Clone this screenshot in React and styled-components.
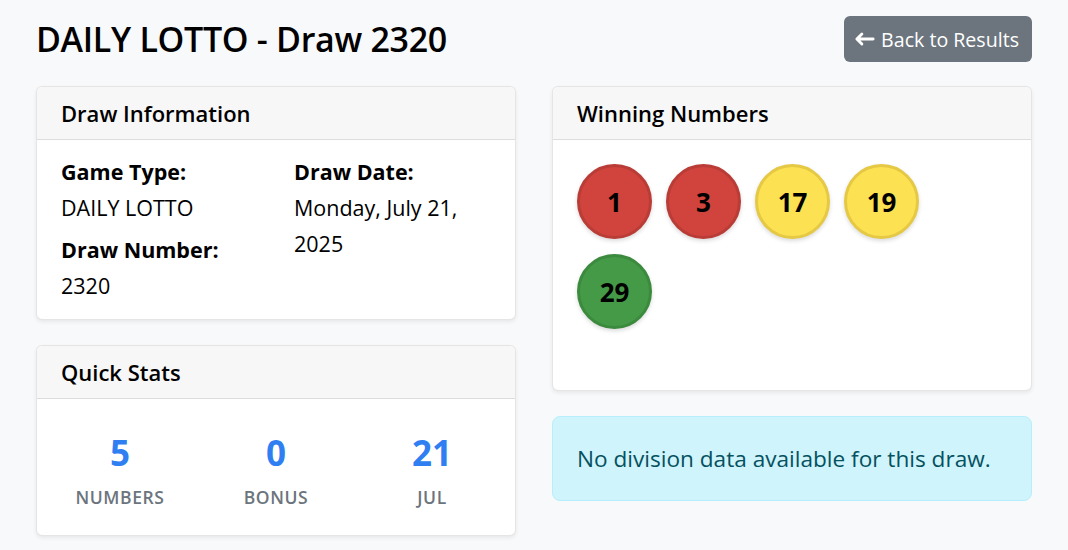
import React from 'react';
import styled, { createGlobalStyle } from 'styled-components';
import { BsArrowLeft } from 'react-icons/bs';

const GlobalStyle = createGlobalStyle`
  * { box-sizing: border-box; }
  body {
    margin: 0;
    background-color: #f8f9fa;
    font-family: "Open Sans", "Noto Sans", sans-serif;
    color: #212529;
  }
`;

const Page = styled.div`
  padding: 16px 36px 24px;
`;

const Header = styled.div`
  display: flex;
  justify-content: space-between;
  align-items: center;
  margin-bottom: 24px;
`;

const Title = styled.h1`
  margin: 0;
  font-size: 34px;
  font-weight: 600;
  color: #000;
  letter-spacing: -0.3px;
`;

const BackButton = styled.button`
  display: flex;
  align-items: center;
  gap: 6px;
  height: 46px;
  padding: 0 13px 0 11px;
  background-color: #6c757d;
  color: #fff;
  border: none;
  border-radius: 6px;
  font-family: inherit;
  font-size: 19.6px;
  cursor: pointer;
`;

const Columns = styled.div`
  display: grid;
  grid-template-columns: 1fr 1fr;
  column-gap: 36px;
  align-items: start;
`;

const Column = styled.div`
  display: flex;
  flex-direction: column;
  gap: 25px;
`;

const Card = styled.div`
  background-color: #fff;
  border: 1px solid rgba(0, 0, 0, 0.1);
  border-radius: 6px;
  box-shadow: 0 2px 4px rgba(0, 0, 0, 0.07);
  overflow: hidden;
`;

const CardHeader = styled.div`
  height: 53px;
  display: flex;
  align-items: center;
  padding: 0 24px;
  background-color: #f7f7f7;
  border-bottom: 1px solid rgba(0, 0, 0, 0.1);
`;

const CardTitle = styled.h5`
  margin: 0;
  font-size: 22px;
  font-weight: 600;
  color: #000;
`;

const InfoBody = styled.div`
  display: grid;
  grid-template-columns: 1fr 1fr;
  column-gap: 36px;
  padding: 14px 24px 15px;
`;

const InfoItem = styled.div`
  & + & { margin-top: 6px; }
`;

const Label = styled.div`
  font-size: 21.5px;
  font-weight: 700;
  line-height: 36px;
  color: #000;
`;

const Value = styled.div`
  font-size: 21.5px;
  line-height: 36px;
  color: #000;
`;

const StatsBody = styled.div`
  display: grid;
  grid-template-columns: repeat(3, 1fr);
  padding: 30px 5px 23px;
`;

const Stat = styled.div`
  text-align: center;
`;

const StatValue = styled.div`
  font-size: 35px;
  font-weight: 700;
  line-height: 48px;
  color: #2f7ff2;
`;

const StatLabel = styled.div`
  margin-top: 5px;
  font-size: 17.5px;
  font-weight: 600;
  letter-spacing: 0.6px;
  text-transform: uppercase;
  color: #6c757d;
  line-height: 30px;
`;

const BallsBody = styled.div`
  display: flex;
  flex-wrap: wrap;
  gap: 15px 14px;
  padding: 24px 24px 61px;
`;

const ballColors = {
  red: ['#d0443d', '#b93c36'],
  yellow: ['#fce152', '#e5c843'],
  green: ['#459a47', '#3b8a3e'],
};

const Ball = styled.div`
  width: 75px;
  height: 75px;
  border-radius: 50%;
  display: flex;
  align-items: center;
  justify-content: center;
  background-color: ${(p) => ballColors[p.$color][0]};
  border: 3px solid ${(p) => ballColors[p.$color][1]};
  box-shadow: 0 2px 4px rgba(0, 0, 0, 0.15);
  font-size: 26px;
  font-weight: 700;
  color: #000;
`;

const Alert = styled.div`
  height: 85px;
  display: flex;
  align-items: center;
  padding: 0 24px;
  background-color: #cff4fc;
  border: 1px solid #b6effb;
  border-radius: 8px;
  color: #055160;
  font-size: 22.6px;
`;

const numbers = [
  { n: 1, color: 'red' },
  { n: 3, color: 'red' },
  { n: 17, color: 'yellow' },
  { n: 19, color: 'yellow' },
  { n: 29, color: 'green' },
];

const stats = [
  { value: 5, label: 'Numbers' },
  { value: 0, label: 'Bonus' },
  { value: 21, label: 'Jul' },
];

export default function App() {
  return (
    <>
      <GlobalStyle />
      <Page>
        <Header>
          <Title>DAILY LOTTO - Draw 2320</Title>
          <BackButton>
            <BsArrowLeft size={20} style={{ strokeWidth: 1.3, stroke: 'currentColor' }} />
            Back to Results
          </BackButton>
        </Header>
        <Columns>
          <Column>
            <Card>
              <CardHeader>
                <CardTitle>Draw Information</CardTitle>
              </CardHeader>
              <InfoBody>
                <div>
                  <InfoItem>
                    <Label>Game Type:</Label>
                    <Value>DAILY LOTTO</Value>
                  </InfoItem>
                  <InfoItem>
                    <Label>Draw Number:</Label>
                    <Value>2320</Value>
                  </InfoItem>
                </div>
                <div>
                  <InfoItem>
                    <Label>Draw Date:</Label>
                    <Value>Monday, July 21, 2025</Value>
                  </InfoItem>
                </div>
              </InfoBody>
            </Card>
            <Card>
              <CardHeader>
                <CardTitle>Quick Stats</CardTitle>
              </CardHeader>
              <StatsBody>
                {stats.map((s) => (
                  <Stat key={s.label}>
                    <StatValue>{s.value}</StatValue>
                    <StatLabel>{s.label}</StatLabel>
                  </Stat>
                ))}
              </StatsBody>
            </Card>
          </Column>
          <Column>
            <Card>
              <CardHeader>
                <CardTitle>Winning Numbers</CardTitle>
              </CardHeader>
              <BallsBody>
                {numbers.map((b) => (
                  <Ball key={b.n} $color={b.color}>{b.n}</Ball>
                ))}
              </BallsBody>
            </Card>
            <Alert>No division data available for this draw.</Alert>
          </Column>
        </Columns>
      </Page>
    </>
  );
}
